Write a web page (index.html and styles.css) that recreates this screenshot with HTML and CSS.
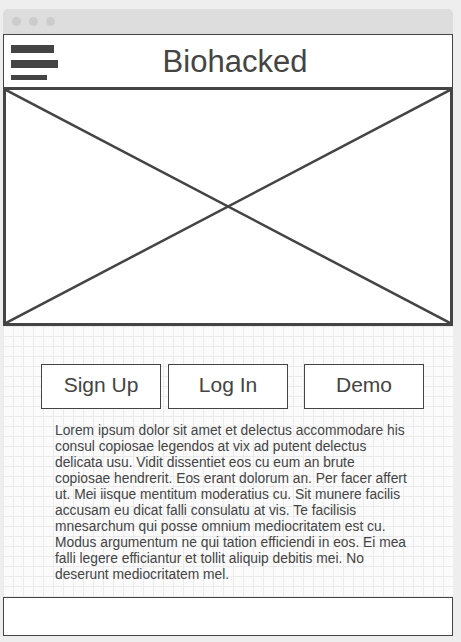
FILE: index.html
```html
<!DOCTYPE html>
<html>
<head>
<meta charset="utf-8">
<link rel="stylesheet" href="styles.css">
</head>
<body>
<div class="window">
  <div class="titlebar">
    <span class="dot"></span><span class="dot"></span><span class="dot"></span>
  </div>
  <header class="header">
    <div class="burger">
      <span class="bar bar1"></span>
      <span class="bar bar2"></span>
      <span class="bar bar3"></span>
    </div>
    <h1 class="title">Biohacked</h1>
  </header>
  <div class="hero">
    <svg class="cross" viewBox="0 0 444 233" preserveAspectRatio="none">
      <line x1="0" y1="0" x2="444" y2="233"/>
      <line x1="444" y1="0" x2="0" y2="233"/>
    </svg>
  </div>
  <main class="content">
    <div class="buttons">
      <div class="btn">Sign Up</div>
      <div class="btn">Log In</div>
      <div class="btn demo">Demo</div>
    </div>
    <p class="text">Lorem ipsum dolor sit amet et delectus accommodare his consul copiosae legendos at vix ad putent delectus delicata usu. Vidit dissentiet eos cu eum an brute copiosae hendrerit. Eos erant dolorum an. Per facer affert ut. Mei iisque mentitum moderatius cu. Sit munere facilis accusam eu dicat falli consulatu at vis. Te facilisis mnesarchum qui posse omnium mediocritatem est cu. Modus argumentum ne qui tation efficiendi in eos. Ei mea falli legere efficiantur et tollit aliquip debitis mei. No deserunt mediocritatem mel.</p>
  </main>
  <footer class="footer"></footer>
</div>
</body>
</html>
```

FILE: styles.css
```css
html, body {
  margin: 0;
  padding: 0;
  background: #eeeeee;
  font-family: "Liberation Sans", Arial, sans-serif;
  color: #444444;
}
.window {
  width: 450px;
  margin: 9px 0 0 3px;
}
.titlebar {
  height: 25px;
  background: #dddddd;
  border-radius: 5px 5px 0 0;
  display: flex;
  align-items: center;
  gap: 8px;
  padding-left: 9px;
  box-sizing: border-box;
}
.dot {
  width: 9px;
  height: 9px;
  border-radius: 50%;
  background: #cccccc;
}
.header {
  height: 53px;
  box-sizing: border-box;
  background: #ffffff;
  border: 1px solid #444444;
  border-bottom: none;
  position: relative;
  display: flex;
  align-items: center;
  justify-content: center;
}
.burger {
  position: absolute;
  left: 7px;
  top: 10px;
  display: flex;
  flex-direction: column;
}
.bar {
  display: block;
  background: #444444;
}
.bar1 { width: 43px; height: 8px; }
.bar2 { width: 47px; height: 8px; margin-top: 7px; }
.bar3 { width: 36px; height: 5px; margin-top: 7px; }
.title {
  margin: 0 0 0 14px;
  font-weight: normal;
  font-size: 31px;
  line-height: 1;
}
.hero {
  height: 239px;
  box-sizing: border-box;
  border: 3px solid #444444;
  background: #ffffff;
}
.cross {
  display: block;
  width: 100%;
  height: 100%;
}
.cross line {
  stroke: #444444;
  stroke-width: 2.5;
  vector-effect: non-scaling-stroke;
}
.content {
  height: 271px;
  box-sizing: border-box;
  padding-top: 38px;
  background-color: #fbfbfb;
  background-image:
    linear-gradient(to right, #ebebeb 1px, transparent 1px),
    linear-gradient(to bottom, #ebebeb 1px, transparent 1px);
  background-size: 10px 10px;
}
.buttons {
  display: flex;
  gap: 7px;
  padding-left: 38px;
}
.btn {
  width: 120px;
  height: 45px;
  box-sizing: border-box;
  border: 1px solid #444444;
  background: #ffffff;
  display: flex;
  align-items: center;
  justify-content: center;
  padding-bottom: 3px;
  font-size: 21px;
}
.demo {
  margin-left: 9px;
}
.text {
  margin: 14px 0 0 52px;
  width: 356px;
  font-size: 13.8px;
  line-height: 16px;
}
.footer {
  height: 39px;
  box-sizing: border-box;
  border: 1px solid #444444;
  background: #ffffff;
}
```
